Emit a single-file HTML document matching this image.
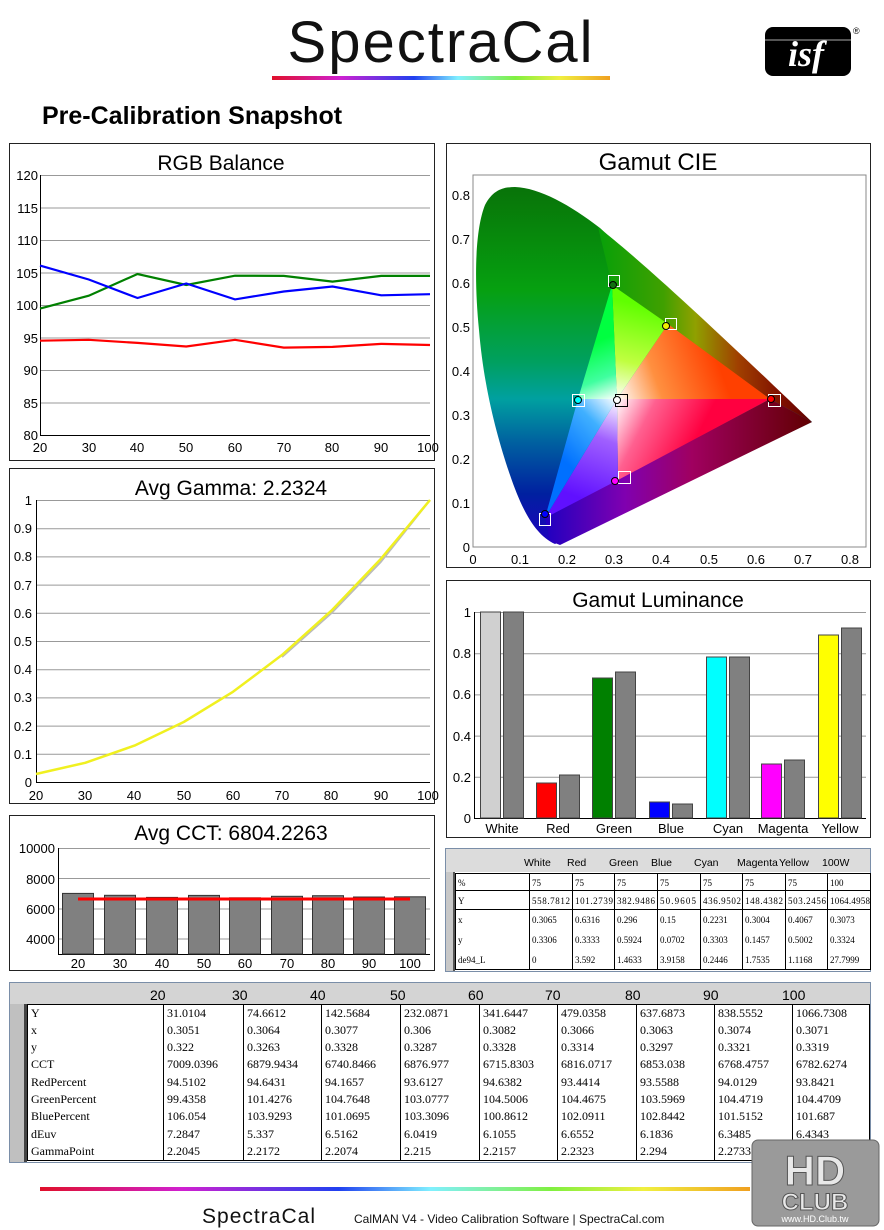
<!DOCTYPE html>
<html><head><meta charset="utf-8"><style>
body{margin:0;background:#fff;width:884px;height:1230px;overflow:hidden;font-family:"Liberation Sans",sans-serif}
svg{position:absolute;left:0;top:0}
</style></head><body>
<svg width="884" height="1230" viewBox="0 0 884 1230" font-family="Liberation Sans, DejaVu Sans, sans-serif">
<defs>
<linearGradient id="rb" x1="0" x2="1"><stop offset="0" stop-color="#e0102a"/><stop offset=".2" stop-color="#d020d0"/><stop offset=".42" stop-color="#2040f0"/><stop offset=".55" stop-color="#80f0ff"/><stop offset=".72" stop-color="#80f040"/><stop offset=".85" stop-color="#f0f040"/><stop offset="1" stop-color="#f0a020"/></linearGradient>
<linearGradient id="loc" x1="0" y1="180" x2="0" y2="545" gradientUnits="userSpaceOnUse"><stop offset="0" stop-color="#087008"/><stop offset=".3" stop-color="#06a010"/><stop offset=".5" stop-color="#00a060"/><stop offset=".6" stop-color="#00a0a0"/><stop offset=".72" stop-color="#0060a0"/><stop offset=".86" stop-color="#0020a0"/><stop offset="1" stop-color="#2000c0"/></linearGradient>
<linearGradient id="ub" x1="600" y1="0" x2="812" y2="0" gradientUnits="userSpaceOnUse"><stop offset="0" stop-color="#08a008"/><stop offset=".3" stop-color="#40a000"/><stop offset=".45" stop-color="#90a000"/><stop offset=".65" stop-color="#a04000"/><stop offset=".85" stop-color="#801000"/><stop offset="1" stop-color="#600000"/></linearGradient>
<linearGradient id="bb" x1="545" y1="0" x2="812" y2="0" gradientUnits="userSpaceOnUse"><stop offset="0" stop-color="#2000c0"/><stop offset=".3" stop-color="#8000b0"/><stop offset=".55" stop-color="#a00060"/><stop offset="1" stop-color="#600000"/></linearGradient>
<linearGradient id="t1" x1="640" y1="305" x2="617" y2="399" gradientUnits="userSpaceOnUse"><stop offset="0" stop-color="#60ff00"/><stop offset=".6" stop-color="#c0ff40"/><stop offset="1" stop-color="#fff"/></linearGradient>
<linearGradient id="t2" x1="718" y1="362" x2="617" y2="399" gradientUnits="userSpaceOnUse"><stop offset="0" stop-color="#ff4000"/><stop offset=".6" stop-color="#ff9040"/><stop offset="1" stop-color="#fff"/></linearGradient>
<linearGradient id="t3" x1="695" y1="440" x2="617" y2="399" gradientUnits="userSpaceOnUse"><stop offset="0" stop-color="#ff0040"/><stop offset=".6" stop-color="#ff6090"/><stop offset="1" stop-color="#fff"/></linearGradient>
<linearGradient id="t4" x1="580" y1="498" x2="617" y2="399" gradientUnits="userSpaceOnUse"><stop offset="0" stop-color="#6010ff"/><stop offset=".6" stop-color="#a060ff"/><stop offset="1" stop-color="#fff"/></linearGradient>
<linearGradient id="t5" x1="561" y1="458" x2="617" y2="399" gradientUnits="userSpaceOnUse"><stop offset="0" stop-color="#0070ff"/><stop offset=".6" stop-color="#40b0ff"/><stop offset="1" stop-color="#fff"/></linearGradient>
<linearGradient id="t6" x1="595" y1="342" x2="617" y2="399" gradientUnits="userSpaceOnUse"><stop offset="0" stop-color="#00ff40"/><stop offset=".6" stop-color="#40ffa0"/><stop offset="1" stop-color="#fff"/></linearGradient>
</defs>

<!-- header -->
<text x="440" y="62" font-size="58" text-anchor="middle" fill="#111" textLength="305">SpectraCal</text>
<rect x="272" y="76" width="338" height="4" fill="url(#rb)"/>
<rect x="765" y="27" width="86" height="49" rx="8" fill="#000"/>
<line x1="765" y1="40" x2="851" y2="40" stroke="#aaa" stroke-width="1"/>
<text x="806" y="66" font-family="Liberation Serif, serif" font-style="italic" font-weight="bold" font-size="36" fill="#fff" text-anchor="middle">isf</text>
<text x="853" y="34" font-size="9" fill="#000">®</text>
<text x="42" y="124" font-size="25" font-weight="bold" fill="#000">Pre-Calibration Snapshot</text>

<!-- panels -->
<g fill="#fff" stroke="#222" stroke-width="1">
<rect x="9.5" y="143.5" width="425" height="317"/>
<rect x="9.5" y="468.5" width="425" height="335"/>
<rect x="9.5" y="815.5" width="425" height="155"/>
<rect x="446.5" y="143.5" width="424" height="424"/>
<rect x="446.5" y="580.5" width="424" height="257"/>
</g>

<!-- RGB balance -->
<text x="221" y="170" font-size="21" text-anchor="middle" fill="#000">RGB Balance</text>
<g stroke="#999" stroke-width="1">
<line x1="40" y1="175.5" x2="430" y2="175.5"/><line x1="40" y1="208" x2="430" y2="208"/><line x1="40" y1="240.5" x2="430" y2="240.5"/><line x1="40" y1="273" x2="430" y2="273"/><line x1="40" y1="305.5" x2="430" y2="305.5"/><line x1="40" y1="338" x2="430" y2="338"/><line x1="40" y1="370.5" x2="430" y2="370.5"/><line x1="40" y1="403" x2="430" y2="403"/>
</g>
<line x1="40" y1="435.5" x2="430" y2="435.5" stroke="#000"/>
<line x1="40.5" y1="175" x2="40.5" y2="436" stroke="#000"/>
<g font-size="13" fill="#000" text-anchor="end">
<text x="38" y="180">120</text><text x="38" y="213">115</text><text x="38" y="245">110</text><text x="38" y="278">105</text><text x="38" y="310">100</text><text x="38" y="343">95</text><text x="38" y="375">90</text><text x="38" y="408">85</text><text x="38" y="440">80</text>
</g>
<g font-size="13" fill="#000" text-anchor="middle">
<text x="40" y="452">20</text><text x="89" y="452">30</text><text x="137" y="452">40</text><text x="186" y="452">50</text><text x="235" y="452">60</text><text x="284" y="452">70</text><text x="332" y="452">80</text><text x="381" y="452">90</text><text x="428" y="452">100</text>
</g>
<g fill="none" stroke-width="2.2">
<polyline stroke="#ff0000" points="40,340.7 88.75,339.8 137.5,342.9 186.25,346.5 235,339.8 283.75,347.6 332.5,346.9 381.25,343.9 430,345"/>
<polyline stroke="#008000" points="40,308.6 88.75,295.7 137.5,274 186.25,285 235,275.7 283.75,275.9 332.5,281.6 381.25,275.9 430,275.9"/>
<polyline stroke="#0000ff" points="40,265.6 88.75,279.5 137.5,298 186.25,283.5 235,299.4 283.75,291.5 332.5,286.5 381.25,295.3 430,294.2"/>
</g>

<!-- Avg gamma -->
<text x="231" y="495" font-size="21" text-anchor="middle" fill="#000">Avg Gamma: 2.2324</text>
<g stroke="#999" stroke-width="1">
<line x1="36" y1="500.5" x2="430" y2="500.5"/><line x1="36" y1="528.7" x2="430" y2="528.7"/><line x1="36" y1="556.9" x2="430" y2="556.9"/><line x1="36" y1="585.1" x2="430" y2="585.1"/><line x1="36" y1="613.3" x2="430" y2="613.3"/><line x1="36" y1="641.5" x2="430" y2="641.5"/><line x1="36" y1="669.7" x2="430" y2="669.7"/><line x1="36" y1="697.9" x2="430" y2="697.9"/><line x1="36" y1="726.1" x2="430" y2="726.1"/><line x1="36" y1="754.3" x2="430" y2="754.3"/>
</g>
<line x1="36" y1="782.5" x2="430" y2="782.5" stroke="#000"/>
<line x1="36.5" y1="500" x2="36.5" y2="783" stroke="#000"/>
<g font-size="13" fill="#000" text-anchor="end">
<text x="32" y="505">1</text><text x="32" y="533">0.9</text><text x="32" y="561">0.8</text><text x="32" y="590">0.7</text><text x="32" y="618">0.6</text><text x="32" y="646">0.5</text><text x="32" y="674">0.4</text><text x="32" y="702">0.3</text><text x="32" y="731">0.2</text><text x="32" y="759">0.1</text><text x="32" y="787">0</text>
</g>
<g font-size="13" fill="#000" text-anchor="middle">
<text x="36" y="800">20</text><text x="85" y="800">30</text><text x="134" y="800">40</text><text x="184" y="800">50</text><text x="233" y="800">60</text><text x="282" y="800">70</text><text x="331" y="800">80</text><text x="381" y="800">90</text><text x="428" y="800">100</text>
</g>
<polyline fill="none" stroke="#bbb" stroke-width="2" points="282,657 331.5,613 380.75,562 430,500"/>
<polyline fill="none" stroke="#f0f020" stroke-width="2.5" stroke-linejoin="round" points="36,774 85.25,762.8 134.5,745.6 183.75,722 233,691.8 282.25,654.8 331.5,610.6 380.75,559 430,500"/>

<!-- Avg CCT -->
<text x="231" y="840" font-size="21" text-anchor="middle" fill="#000">Avg CCT: 6804.2263</text>
<g stroke="#999"><line x1="58" y1="848.5" x2="430" y2="848.5"/><line x1="58" y1="878.5" x2="430" y2="878.5"/><line x1="58" y1="909" x2="430" y2="909"/><line x1="58" y1="939" x2="430" y2="939"/></g>
<line x1="58.5" y1="848" x2="58.5" y2="955" stroke="#000"/>
<line x1="58" y1="954.5" x2="430" y2="954.5" stroke="#000"/>
<g font-size="13" fill="#000" text-anchor="end"><text x="55" y="853">10000</text><text x="55" y="884">8000</text><text x="55" y="914">6000</text><text x="55" y="944">4000</text></g>
<g fill="#808080" stroke="#333" stroke-width="1">
<rect x="62.5" y="893.4" width="31" height="60.6"/><rect x="104.5" y="895.3" width="31" height="58.7"/><rect x="146.5" y="897.4" width="31" height="56.6"/><rect x="188.5" y="895.4" width="31" height="58.6"/><rect x="229.5" y="897.8" width="31" height="56.2"/><rect x="271.5" y="896.3" width="31" height="57.7"/><rect x="312.5" y="895.7" width="31" height="58.3"/><rect x="353.5" y="897" width="31" height="57"/><rect x="394.5" y="896.8" width="31" height="57.2"/>
</g>
<line x1="78" y1="899" x2="410" y2="899" stroke="#ff0000" stroke-width="3"/>
<g font-size="13" fill="#000" text-anchor="middle"><text x="78" y="968">20</text><text x="120" y="968">30</text><text x="162" y="968">40</text><text x="204" y="968">50</text><text x="245" y="968">60</text><text x="287" y="968">70</text><text x="328" y="968">80</text><text x="369" y="968">90</text><text x="410" y="968">100</text></g>

<!-- Gamut CIE -->
<text x="658" y="170" font-size="24" text-anchor="middle" fill="#000">Gamut CIE</text>
<rect x="473" y="175" width="393" height="372" fill="#fff" stroke="#888"/>
<g font-size="13" fill="#000" text-anchor="end">
<text x="470" y="200">0.8</text><text x="470" y="244">0.7</text><text x="470" y="288">0.6</text><text x="470" y="332">0.5</text><text x="470" y="376">0.4</text><text x="470" y="420">0.3</text><text x="470" y="464">0.2</text><text x="470" y="508">0.1</text><text x="470" y="552">0</text>
</g>
<g font-size="13" fill="#000" text-anchor="middle">
<text x="473" y="564">0</text><text x="520" y="564">0.1</text><text x="567" y="564">0.2</text><text x="614" y="564">0.3</text><text x="661" y="564">0.4</text><text x="709" y="564">0.5</text><text x="756" y="564">0.6</text><text x="803" y="564">0.7</text><text x="850" y="564">0.8</text>
</g>
<path d="M555,544 C535,535 522,510 510,475 C498,440 484,390 479,330 C474,280 475,230 485,205 C493,190 503,187 515,187 C540,188 570,205 600,228 L812,422 Z" fill="url(#loc)"/>
<path d="M598,227 C640,260 700,315 812,422 L770,399 L612,285 Z" fill="url(#ub)"/>
<polygon points="545,518 770,399 812,422 560,545 550,541" fill="url(#bb)"/>
<polygon points="617,399 612,285 668,324" fill="url(#t1)"/>
<polygon points="617,399 668,324 770,399" fill="url(#t2)"/>
<polygon points="617,399 770,399 618,480" fill="url(#t3)"/>
<polygon points="617,399 618,480 545,518" fill="url(#t4)"/>
<polygon points="617,399 545,518 578,399" fill="url(#t5)"/>
<polygon points="617,399 578,399 612,285" fill="url(#t6)"/>
<g fill="none" stroke-width="1">
<rect x="608.5" y="275.5" width="11" height="11" stroke="#fff"/><circle cx="613" cy="285" r="3.5" fill="#107010" stroke="#000"/>
<rect x="665.5" y="318.5" width="11" height="11" stroke="#fff"/><circle cx="666" cy="326" r="3.5" fill="#f0f000" stroke="#000"/>
<rect x="572.5" y="394.5" width="12" height="12" stroke="#fff"/><circle cx="578" cy="400" r="3.5" fill="#00ffff" stroke="#000"/>
<rect x="615.5" y="394.5" width="12" height="12" stroke="#000"/><circle cx="617" cy="400" r="3.5" fill="#fff" stroke="#000"/>
<rect x="768.5" y="394.5" width="12" height="12" stroke="#fff"/><circle cx="771" cy="399" r="3.5" fill="#ff0000" stroke="#000"/>
<rect x="618.5" y="471.5" width="12" height="12" stroke="#fff"/><circle cx="615" cy="481" r="3.5" fill="#ff00ff" stroke="#000"/>
<rect x="539.5" y="513.5" width="11" height="12" stroke="#fff"/><circle cx="545" cy="514" r="3.5" fill="#0000ff" stroke="#000"/>
</g>

<!-- Gamut luminance -->
<text x="658" y="607" font-size="21" text-anchor="middle" fill="#000">Gamut Luminance</text>
<g stroke="#999"><line x1="474" y1="612.5" x2="866" y2="612.5"/><line x1="474" y1="653.7" x2="866" y2="653.7"/><line x1="474" y1="694.9" x2="866" y2="694.9"/><line x1="474" y1="736.1" x2="866" y2="736.1"/><line x1="474" y1="777.3" x2="866" y2="777.3"/></g>
<line x1="474" y1="818.5" x2="866" y2="818.5" stroke="#000"/>
<line x1="474.5" y1="612" x2="474.5" y2="819" stroke="#000"/>
<g font-size="13" fill="#000" text-anchor="end"><text x="471" y="617">1</text><text x="471" y="658">0.8</text><text x="471" y="699">0.6</text><text x="471" y="741">0.4</text><text x="471" y="782">0.2</text><text x="471" y="823">0</text></g>
<g stroke="#444" stroke-width="1">
<rect x="480.5" y="612" width="20" height="206" fill="#d0d0d0"/><rect x="503.5" y="612" width="20" height="206" fill="#808080"/>
<rect x="536.5" y="783" width="20" height="35" fill="#ff0000"/><rect x="559.5" y="775" width="20" height="43" fill="#808080"/>
<rect x="592.5" y="678" width="20" height="140" fill="#008000"/><rect x="615.5" y="672" width="20" height="146" fill="#808080"/>
<rect x="649.5" y="802" width="20" height="16" fill="#0000ff"/><rect x="672.5" y="804" width="20" height="14" fill="#808080"/>
<rect x="706.5" y="657" width="20" height="161" fill="#00ffff"/><rect x="729.5" y="657" width="20" height="161" fill="#808080"/>
<rect x="761.5" y="764" width="20" height="54" fill="#ff00ff"/><rect x="784.5" y="760" width="20" height="58" fill="#808080"/>
<rect x="818.5" y="635" width="20" height="183" fill="#ffff00"/><rect x="841.5" y="628" width="20" height="190" fill="#808080"/>
</g>
<g font-size="13" fill="#000" text-anchor="middle"><text x="502" y="833">White</text><text x="558" y="833">Red</text><text x="614" y="833">Green</text><text x="671" y="833">Blue</text><text x="728" y="833">Cyan</text><text x="783" y="833">Magenta</text><text x="840" y="833">Yellow</text></g>

<!-- Gamut table -->
<rect x="445.5" y="848.5" width="425" height="123" fill="#fff" stroke="#7a8ea8"/>
<rect x="446" y="849" width="424" height="23" fill="#dcdcdc"/>
<rect x="446" y="872" width="7" height="99" fill="#c8c8c8"/><rect x="453" y="872" width="2" height="99" fill="#555"/>
<g font-size="10.5" fill="#000"><text x="524" y="866">White</text><text x="567" y="866">Red</text><text x="609" y="866">Green</text><text x="651" y="866">Blue</text><text x="694" y="866">Cyan</text><text x="737" y="866">Magenta</text><text x="779" y="866">Yellow</text><text x="822" y="866">100W</text></g>
<g stroke="#000" stroke-width="1" fill="none">
<rect x="455.5" y="873.5" width="415" height="96"/>
<line x1="455" y1="890.5" x2="871" y2="890.5"/><line x1="455" y1="909.5" x2="871" y2="909.5"/>
<line x1="529.5" y1="873" x2="529.5" y2="970"/><line x1="572.5" y1="873" x2="572.5" y2="970"/><line x1="614.5" y1="873" x2="614.5" y2="970"/><line x1="657.5" y1="873" x2="657.5" y2="970"/><line x1="700.5" y1="873" x2="700.5" y2="970"/><line x1="742.5" y1="873" x2="742.5" y2="970"/><line x1="785.5" y1="873" x2="785.5" y2="970"/><line x1="827.5" y1="873" x2="827.5" y2="970"/>
</g>
<g font-family="Liberation Serif, serif" font-size="9" fill="#000">
<text x="458" y="886">%</text><text x="532" y="886">75</text><text x="575" y="886">75</text><text x="617" y="886">75</text><text x="660" y="886">75</text><text x="703" y="886">75</text><text x="745" y="886">75</text><text x="788" y="886">75</text><text x="830" y="886">100</text>
<text x="458" y="904">Y</text><text x="532" y="904" textLength="38">558.7812</text><text x="575" y="904" textLength="38">101.2739</text><text x="617" y="904" textLength="38">382.9486</text><text x="660" y="904" textLength="36">50.9605</text><text x="703" y="904" textLength="38">436.9502</text><text x="745" y="904" textLength="38">148.4382</text><text x="788" y="904" textLength="38">503.2456</text><text x="830" y="904" textLength="40">1064.4958</text>
<text x="458" y="923">x</text><text x="532" y="923">0.3065</text><text x="575" y="923">0.6316</text><text x="617" y="923">0.296</text><text x="660" y="923">0.15</text><text x="703" y="923">0.2231</text><text x="745" y="923">0.3004</text><text x="788" y="923">0.4067</text><text x="830" y="923">0.3073</text>
<text x="458" y="943">y</text><text x="532" y="943">0.3306</text><text x="575" y="943">0.3333</text><text x="617" y="943">0.5924</text><text x="660" y="943">0.0702</text><text x="703" y="943">0.3303</text><text x="745" y="943">0.1457</text><text x="788" y="943">0.5002</text><text x="830" y="943">0.3324</text>
<text x="458" y="963">de94_L</text><text x="532" y="963">0</text><text x="575" y="963">3.592</text><text x="617" y="963">1.4633</text><text x="660" y="963">3.9158</text><text x="703" y="963">0.2446</text><text x="745" y="963">1.7535</text><text x="788" y="963">1.1168</text><text x="830" y="963">27.7999</text>
</g>

<!-- Bottom table -->
<rect x="9.5" y="982.5" width="861" height="180" fill="#fff" stroke="#7a8ea8"/>
<rect x="10" y="983" width="860" height="21" fill="#d4d4d4"/>
<rect x="10" y="1004" width="14" height="158" fill="#c0c0c0"/><rect x="24" y="1004" width="3" height="158" fill="#444"/>
<g font-size="14" fill="#000"><text x="150" y="1000">20</text><text x="232" y="1000">30</text><text x="310" y="1000">40</text><text x="390" y="1000">50</text><text x="468" y="1000">60</text><text x="545" y="1000">70</text><text x="625" y="1000">80</text><text x="703" y="1000">90</text><text x="782" y="1000">100</text></g>
<g stroke="#000" fill="none">
<rect x="27.5" y="1004.5" width="842" height="156"/>
<line x1="163.5" y1="1004" x2="163.5" y2="1161"/><line x1="243.5" y1="1004" x2="243.5" y2="1161"/><line x1="321.5" y1="1004" x2="321.5" y2="1161"/><line x1="400.5" y1="1004" x2="400.5" y2="1161"/><line x1="479.5" y1="1004" x2="479.5" y2="1161"/><line x1="557.5" y1="1004" x2="557.5" y2="1161"/><line x1="636.5" y1="1004" x2="636.5" y2="1161"/><line x1="714.5" y1="1004" x2="714.5" y2="1161"/><line x1="792.5" y1="1004" x2="792.5" y2="1161"/>
</g>
<g font-family="Liberation Serif, serif" font-size="12" fill="#000">
<text x="31" y="1017">Y</text><text x="167" y="1017">31.0104</text><text x="247" y="1017">74.6612</text><text x="325" y="1017">142.5684</text><text x="404" y="1017">232.0871</text><text x="483" y="1017">341.6447</text><text x="561" y="1017">479.0358</text><text x="640" y="1017">637.6873</text><text x="718" y="1017">838.5552</text><text x="796" y="1017">1066.7308</text>
<text x="31" y="1034">x</text><text x="167" y="1034">0.3051</text><text x="247" y="1034">0.3064</text><text x="325" y="1034">0.3077</text><text x="404" y="1034">0.306</text><text x="483" y="1034">0.3082</text><text x="561" y="1034">0.3066</text><text x="640" y="1034">0.3063</text><text x="718" y="1034">0.3074</text><text x="796" y="1034">0.3071</text>
<text x="31" y="1051">y</text><text x="167" y="1051">0.322</text><text x="247" y="1051">0.3263</text><text x="325" y="1051">0.3328</text><text x="404" y="1051">0.3287</text><text x="483" y="1051">0.3328</text><text x="561" y="1051">0.3314</text><text x="640" y="1051">0.3297</text><text x="718" y="1051">0.3321</text><text x="796" y="1051">0.3319</text>
<text x="31" y="1068">CCT</text><text x="167" y="1068">7009.0396</text><text x="247" y="1068">6879.9434</text><text x="325" y="1068">6740.8466</text><text x="404" y="1068">6876.977</text><text x="483" y="1068">6715.8303</text><text x="561" y="1068">6816.0717</text><text x="640" y="1068">6853.038</text><text x="718" y="1068">6768.4757</text><text x="796" y="1068">6782.6274</text>
<text x="31" y="1086">RedPercent</text><text x="167" y="1086">94.5102</text><text x="247" y="1086">94.6431</text><text x="325" y="1086">94.1657</text><text x="404" y="1086">93.6127</text><text x="483" y="1086">94.6382</text><text x="561" y="1086">93.4414</text><text x="640" y="1086">93.5588</text><text x="718" y="1086">94.0129</text><text x="796" y="1086">93.8421</text>
<text x="31" y="1103">GreenPercent</text><text x="167" y="1103">99.4358</text><text x="247" y="1103">101.4276</text><text x="325" y="1103">104.7648</text><text x="404" y="1103">103.0777</text><text x="483" y="1103">104.5006</text><text x="561" y="1103">104.4675</text><text x="640" y="1103">103.5969</text><text x="718" y="1103">104.4719</text><text x="796" y="1103">104.4709</text>
<text x="31" y="1120">BluePercent</text><text x="167" y="1120">106.054</text><text x="247" y="1120">103.9293</text><text x="325" y="1120">101.0695</text><text x="404" y="1120">103.3096</text><text x="483" y="1120">100.8612</text><text x="561" y="1120">102.0911</text><text x="640" y="1120">102.8442</text><text x="718" y="1120">101.5152</text><text x="796" y="1120">101.687</text>
<text x="31" y="1138">dEuv</text><text x="167" y="1138">7.2847</text><text x="247" y="1138">5.337</text><text x="325" y="1138">6.5162</text><text x="404" y="1138">6.0419</text><text x="483" y="1138">6.1055</text><text x="561" y="1138">6.6552</text><text x="640" y="1138">6.1836</text><text x="718" y="1138">6.3485</text><text x="796" y="1138">6.4343</text>
<text x="31" y="1155">GammaPoint</text><text x="167" y="1155">2.2045</text><text x="247" y="1155">2.2172</text><text x="325" y="1155">2.2074</text><text x="404" y="1155">2.215</text><text x="483" y="1155">2.2157</text><text x="561" y="1155">2.2323</text><text x="640" y="1155">2.294</text><text x="718" y="1155">2.2733</text><text x="796" y="1155">2.2</text>
</g>

<!-- footer -->
<rect x="40" y="1187" width="710" height="4" fill="url(#rb)"/>
<text x="202" y="1223" font-size="21" fill="#111" textLength="113">SpectraCal</text>
<text x="354" y="1223" font-size="12" fill="#111">CalMAN V4 - Video Calibration Software | SpectraCal.com</text>
<rect x="752" y="1140" width="127" height="86" rx="6" fill="#9a9a9a" stroke="#666"/>
<text x="815" y="1185" font-size="42" font-weight="bold" text-anchor="middle" fill="#e8e8e8" stroke="#555" stroke-width="1">HD</text>
<text x="815" y="1210" font-size="24" font-weight="bold" text-anchor="middle" fill="#e8e8e8" stroke="#555" stroke-width="1">CLUB</text>
<text x="815" y="1222" font-size="9" text-anchor="middle" fill="#fff">www.HD.Club.tw</text>
</svg>
</body></html>
